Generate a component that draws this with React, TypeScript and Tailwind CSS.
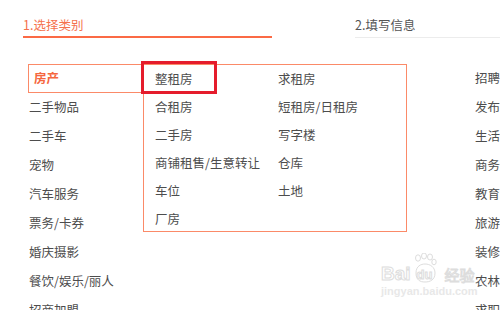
import React from "react";

const leftItems = [
  "房产",
  "二手物品",
  "二手车",
  "宠物",
  "汽车服务",
  "票务/卡券",
  "婚庆摄影",
  "餐饮/娱乐/丽人",
  "招商加盟",
];

const rightItems = ["招聘", "发布", "生活", "商务", "教育", "旅游", "装修", "农林", "求职"];

const subCol1 = ["整租房", "合租房", "二手房", "商铺租售/生意转让", "车位", "厂房"];
const subCol2 = ["求租房", "短租房/日租房", "写字楼", "仓库", "土地"];

function Watermark() {
  return (
    <div className="absolute left-[381px] top-[253px] flex flex-col items-start pointer-events-none select-none">
      <div className="flex items-end gap-[2px]">
        <span className="text-[19px] leading-[18px] font-bold font-['Liberation_Sans',sans-serif] text-transparent [-webkit-text-stroke:1px_#dddddd]">
          Bai
        </span>
        <div className="relative w-[24px] h-[30px]">
          <svg width="24" height="30" viewBox="0 0 24 30" className="absolute left-0 top-0">
            <ellipse cx="5" cy="5" rx="2.5" ry="3.2" fill="none" stroke="#dddddd" />
            <ellipse cx="11" cy="3" rx="2.5" ry="3" fill="none" stroke="#dddddd" />
            <ellipse cx="17" cy="4" rx="2.5" ry="3" fill="none" stroke="#dddddd" />
            <ellipse cx="21" cy="9" rx="2.2" ry="2.8" fill="none" stroke="#dddddd" />
            <path d="M3 20 C3 13 8 11 12 11 C17 11 22 14 22 20 C22 27 17 29 12 29 C7 29 3 27 3 20 Z" fill="none" stroke="#dddddd" />
          </svg>
          <span className="absolute left-[4px] bottom-[1px] text-[13px] leading-[14px] font-bold font-['Liberation_Sans',sans-serif] text-transparent [-webkit-text-stroke:1px_#dddddd]">
            du
          </span>
        </div>
        <span className="ml-[6px] text-[15px] leading-[17px] font-['Noto_Sans_CJK_SC',sans-serif] text-transparent [-webkit-text-stroke:1px_#dddddd]">
          经验
        </span>
      </div>
      <span className="mt-[3px] text-[11px] leading-[11px] font-bold font-['Liberation_Sans',sans-serif] text-[#e8e8e8]">
        jingyan.baidu.com
      </span>
    </div>
  );
}

export default function App() {
  return (
    <div className="relative w-[500px] h-[310px] overflow-hidden bg-white font-['Noto_Sans_CJK_SC',sans-serif] text-[12.5px] text-[#4d4d4d]">
      {/* Tabs */}
      <div className="flex items-end pt-[17px]">
        <div className="ml-[23px] w-[249px] pb-[3px] border-b-2 border-[#fb6a45] text-[#f5714c] leading-[16px]">
          1.选择类别
        </div>
        <div className="ml-[83px] flex-1 pb-[4px] border-b border-[#ececec] text-[#555] leading-[16px]">
          2.填写信息
        </div>
      </div>

      {/* Body */}
      <div className="flex mt-[26px]">
        <ul className="ml-[28px] w-[115px]">
          {leftItems.map((item, i) => (
            <li
              key={item}
              className={
                i === 0
                  ? "h-[29px] flex items-center pl-[5px] border-t border-l border-b border-[#fb8a68] text-[#f5673f] font-bold"
                  : "h-[29px] flex items-center pl-[1px]"
              }
            >
              {item}
            </li>
          ))}
        </ul>

        <ul className="ml-[332px]">
          {rightItems.map((item) => (
            <li key={item} className="h-[29px] flex items-center">
              {item}
            </li>
          ))}
        </ul>
      </div>

      {/* Sub-category popup */}
      <div className="absolute left-[143px] top-[64px] w-[264px] h-[168px] border border-[#fb8a68] bg-white flex">
        <ul className="w-[134px] pl-[11px]">
          {subCol1.map((item) => (
            <li key={item} className="h-[28px] flex items-center">
              {item}
            </li>
          ))}
        </ul>
        <ul className="flex-1">
          {subCol2.map((item) => (
            <li key={item} className="h-[28px] flex items-center">
              {item}
            </li>
          ))}
        </ul>
        <div className="absolute -left-[3px] -top-[4px] w-[76px] h-[33px] border-[3px] border-[#e51c2c]" />
      </div>

      <Watermark />
    </div>
  );
}
